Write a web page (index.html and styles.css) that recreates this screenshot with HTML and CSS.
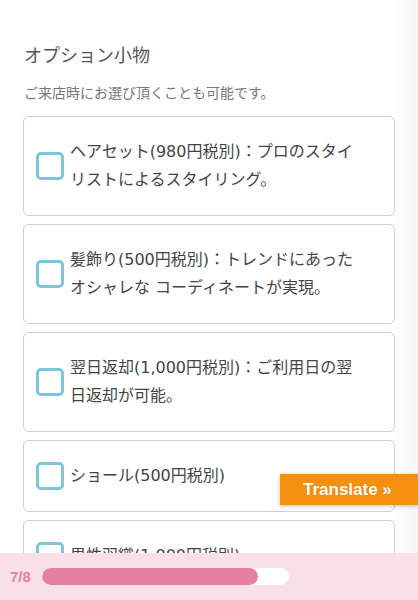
FILE: index.html
```html
<!DOCTYPE html>
<html lang="ja">
<head>
    <meta charset="UTF-8">
    <meta name="viewport" content="width=device-width, initial-scale=1.0">
    <title>オプション小物</title>
    <link rel="stylesheet" href="styles.css">
</head>
<body>
    <div class="page">
        <h2 class="title">オプション小物</h2>
        <p class="lead">ご来店時にお選び頂くことも可能です。</p>

        <div class="options">
            <label class="option">
                <span class="check"></span>
                <span class="label">ヘアセット(980円税別)：プロのスタイリストによるスタイリング。</span>
            </label>
            <label class="option">
                <span class="check"></span>
                <span class="label">髪飾り(500円税別)：トレンドにあったオシャレな コーディネートが実現。</span>
            </label>
            <label class="option">
                <span class="check"></span>
                <span class="label">翌日返却(1,000円税別)：ご利用日の翌日返却が可能。</span>
            </label>
            <label class="option">
                <span class="check"></span>
                <span class="label">ショール(500円税別)</span>
            </label>
            <label class="option">
                <span class="check"></span>
                <span class="label">男性羽織(1,000円税別)</span>
            </label>
        </div>
    </div>

    <div class="edge-shade"></div>

    <div class="translate">Translate &raquo;</div>

    <div class="progress-bar">
        <span class="step">7/8</span>
        <div class="track">
            <div class="fill" style="width: 87.5%;"></div>
        </div>
    </div>
</body>
</html>
```

FILE: styles.css
```css
body {
    margin: 0;
    font-family: "Noto Sans CJK JP", "Noto Sans", sans-serif;
    background: #fff;
    color: #444;
}

.page {
    padding: 40px 23px 120px;
}

.title {
    font-size: 18px;
    font-weight: normal;
    line-height: 28px;
    color: #555;
    margin: 0 0 0 1px;
}

.lead {
    font-size: 14px;
    line-height: 22px;
    color: #777;
    margin: 13px 0 13px 1px;
}

.options {
    display: flex;
    flex-direction: column;
    gap: 8px;
}

.option {
    display: flex;
    align-items: center;
    gap: 6px;
    border: 1px solid #cfcfcf;
    border-radius: 6px;
    padding: 21px 28px 21px 12px;
    background: #fff;
}

.check {
    flex: none;
    width: 22px;
    height: 22px;
    border: 3px solid #7ec6da;
    border-radius: 5px;
}

.label {
    font-family: "DejaVu Sans", "Noto Sans CJK JP", sans-serif;
    font-size: 16px;
    line-height: 28px;
    color: #444;
}

.edge-shade {
    position: fixed;
    top: 0;
    right: 0;
    width: 26px;
    height: 100%;
    background: linear-gradient(to right, rgba(0, 0, 0, 0), rgba(0, 0, 0, 0.035));
    pointer-events: none;
}

.translate {
    position: fixed;
    right: 0;
    top: 474px;
    width: 138px;
    height: 31px;
    line-height: 31px;
    background: #f5900f;
    color: #fff;
    font-family: "Liberation Sans", Arial, sans-serif;
    font-weight: bold;
    font-size: 17px;
    padding-left: 23px;
    box-sizing: border-box;
    box-shadow: 0 1px 4px rgba(0, 0, 0, 0.25);
}

.progress-bar {
    position: fixed;
    left: 0;
    right: 0;
    bottom: 0;
    height: 47px;
    background: #f9e0e8;
    display: flex;
    align-items: center;
    gap: 11px;
    padding-left: 10px;
}

.step {
    font-family: "Liberation Sans", Arial, sans-serif;
    font-weight: bold;
    font-size: 15px;
    color: #e1809f;
}

.track {
    width: 247px;
    height: 17px;
    background: #fff;
    border-radius: 9px;
    overflow: hidden;
}

.fill {
    height: 100%;
    background: #e6829f;
    border-radius: 9px;
}
```
